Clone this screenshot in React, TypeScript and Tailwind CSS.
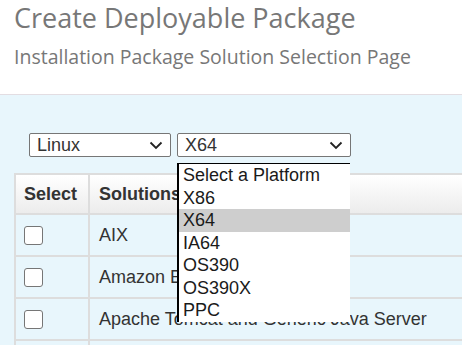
import { ReactNode } from "react";

const platforms = ["Select a Platform", "X86", "X64", "IA64", "OS390", "OS390X", "PPC"];
const solutions = ["AIX", "Amazon EC2", "Apache Tomcat and Generic Java Server", ""];

function Chevron(): ReactNode {
    return (
        <svg width="14" height="9" viewBox="0 0 14 9" className="shrink-0">
            <path d="M1.5 1.5 L7 7 L12.5 1.5" fill="none" stroke="#222" strokeWidth="1.8" />
        </svg>
    );
}

function FakeSelect(props: { value: string; width: string }): ReactNode {
    return (
        <div className={`${props.width} h-[24px] flex items-center justify-between pl-[7px] pr-[7px] bg-white border border-[#767676] rounded-[2px] text-[18px] leading-[20px] text-[#333]`}>
            <span>{props.value}</span>
            <Chevron />
        </div>
    );
}

export default function App() {
    return (
        <div className="relative w-[462px] h-[345px] overflow-hidden bg-white font-['Liberation_Sans',Arial,sans-serif]">
            <div className="h-[94px] px-[14px] font-['Open_Sans',sans-serif] text-[#777]">
                <div className="text-[27px] leading-[34px] pt-[1px]">Create Deployable Package</div>
                <div className="text-[19.5px] leading-[26px] mt-[9px]">Installation Package Solution Selection Page</div>
            </div>

            <div className="border-t border-[#e3dde2] bg-[#e8f6fc] pl-[14px] pt-[38px] h-[260px]">
                <div className="flex gap-[6px] ml-[15px]">
                    <FakeSelect value="Linux" width="w-[142px]" />
                    <FakeSelect value="X64" width="w-[174px]" />
                </div>

                <div className="mt-[16px] w-[470px] border-l-2 border-t-2 border-[#dddddd]">
                    <div className="flex h-[40px] border-b-2 border-[#dddddd] bg-gradient-to-b from-white to-[#ececec] font-bold text-[18px] text-[#333]">
                        <div className="w-[74px] border-r-2 border-[#dddddd] flex items-center pl-[8px]">Select</div>
                        <div className="flex-1 flex items-center pl-[9px]">Solutions</div>
                    </div>
                    {solutions.map((s, i) => (
                        <div key={i} className="flex h-[42px] border-b-2 border-[#dddddd] text-[18px] text-[#333]">
                            <div className="w-[74px] border-r-2 border-[#dddddd] flex items-center pl-[8px]">
                                <div className="w-[19px] h-[19px] rounded-[3px] border border-[#767676] bg-white" />
                            </div>
                            <div className="flex-1 flex items-center pl-[9px]">{s}</div>
                        </div>
                    ))}
                </div>
            </div>

            <div className="absolute left-[177px] top-[163px] w-[173px] h-[159px] overflow-hidden bg-white border-l-2 border-t border-black text-[18px] text-[#1a1a1a]">
                {platforms.map((p) => (
                    <div key={p} className={`h-[22.5px] leading-[22.5px] pl-[4px] ${p === "X64" ? "bg-[#cecece]" : ""}`}>
                        {p}
                    </div>
                ))}
            </div>
        </div>
    );
}
